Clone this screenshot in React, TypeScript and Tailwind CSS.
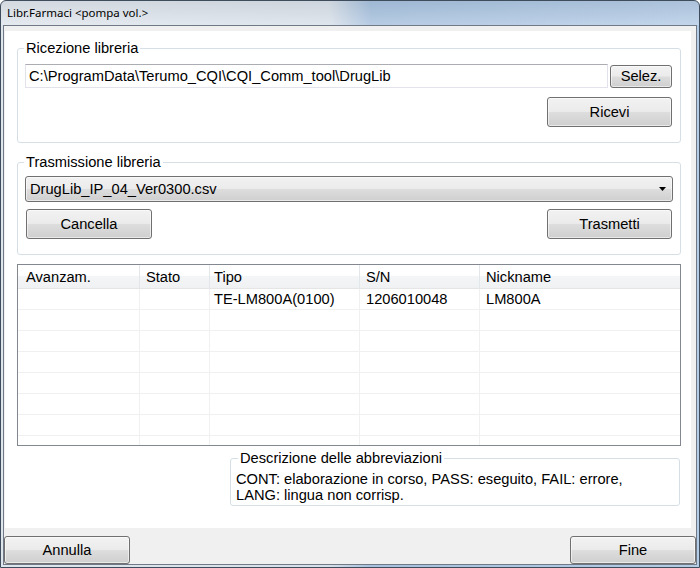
import type { ReactNode } from "react";

const sans = "font-['Liberation_Sans',Arial,sans-serif]";

const skin =
  "flex items-center rounded-[3px] border border-[#707070] bg-[linear-gradient(to_bottom,#f2f2f2_0%,#ebebeb_48%,#dddddd_52%,#cfcfcf_100%)] shadow-[inset_0_0_0_1px_rgba(255,255,255,0.55)] text-[14.67px] leading-[17px] text-black";

function Btn({ children, className = "" }: { children: ReactNode; className?: string }) {
  return <button className={`${skin} justify-center ${className}`}>{children}</button>;
}

function GroupBox({
  title,
  className = "",
  legendClass = "ml-[-1px]",
  children,
}: {
  title: string;
  className?: string;
  legendClass?: string;
  children: ReactNode;
}) {
  return (
    <fieldset className={`min-w-0 rounded-[3px] border border-[#d5dfe5] ${className}`}>
      <legend className={`px-[2px] text-[14.67px] leading-[17px] text-black ${legendClass}`}>{title}</legend>
      {children}
    </fieldset>
  );
}

const columns = [
  { name: "Avanzam.", w: "w-[122px]", pad: "pl-[8px]" },
  { name: "Stato", w: "w-[70px]", pad: "pl-[6px]" },
  { name: "Tipo", w: "w-[150px]", pad: "pl-[4px]" },
  { name: "S/N", w: "w-[120px]", pad: "pl-[6px]" },
  { name: "Nickname", w: "w-[200px]", pad: "pl-[6px]" },
];

const rows = [
  ["", "", "TE-LM800A(0100)", "1206010048", "LM800A"],
  ["", "", "", "", ""],
  ["", "", "", "", ""],
  ["", "", "", "", ""],
  ["", "", "", "", ""],
  ["", "", "", "", ""],
  ["", "", "", "", ""],
  ["", "", "", "", ""],
];

function DeviceTable() {
  return (
    <div className="ml-[12px] mt-[9px] h-[182px] w-[664px] overflow-hidden border border-[#828790] bg-white">
      <div className="flex h-[24px] border-b border-[#e5e5e5] bg-[linear-gradient(to_bottom,#ffffff_0%,#ffffff_45%,#f4f5f6_50%,#f0f1f2_100%)]">
        {columns.map((c, i) => (
          <div
            key={c.name}
            className={`${c.w} ${c.pad} shrink-0 text-[14.67px] leading-[24px] ${i < 4 ? "border-r border-[#e3e6ea]" : ""}`}
          >
            {c.name}
          </div>
        ))}
      </div>
      {rows.map((r, ri) => (
        <div key={ri} className="flex h-[21px] border-b border-[#f0f0f0]">
          {r.map((cell, ci) => (
            <div
              key={ci}
              className={`${columns[ci].w} ${columns[ci].pad} shrink-0 text-[14.67px] leading-[20px] ${ci < 4 ? "border-r border-[#f0f0f0]" : ""}`}
            >
              {cell}
            </div>
          ))}
        </div>
      ))}
    </div>
  );
}

export default function App() {
  return (
    <div
      className={`${sans} flex h-[568px] w-[700px] flex-col overflow-hidden rounded-t-[6px] border border-[#3e4c5c] bg-[linear-gradient(to_right,#dfe5ec_0%,#d8e0e9_47%,#a7c1de_53%,#b5cce6_100%)] text-black`}
    >
      {/* title bar */}
      <div className="flex h-[24px] shrink-0 items-center bg-[linear-gradient(to_bottom,rgba(0,0,0,0.05)_0%,rgba(255,255,255,0.18)_100%)] pl-[6px] font-['Noto_Sans','Open_Sans',sans-serif] text-[11.5px] text-black">
        Libr.Farmaci &lt;pompa vol.&gt;
      </div>

      <div className="flex flex-1 px-[2px] pb-[2px]">
        <div className="flex flex-1 flex-col border border-[#6f7a86] bg-[#f0f0f0]">
          {/* white panel */}
          <div className="ml-[1px] mr-[5px] mt-[5px] h-[497px] bg-white">
            <GroupBox title="Ricezione libreria" className="ml-[12px] mt-[9px] w-[664px] pb-[15px] pl-[7px] pr-[8px] pt-[7px]">
              <div className="flex items-start">
                <div className="flex h-[24px] flex-1 items-center border border-[#e2e3ea] border-t-[#abadb3] pl-[3px] text-[14.67px]">
                  C:\ProgramData\Terumo_CQI\CQI_Comm_tool\DrugLib
                </div>
                <Btn className="ml-[2px] mt-[1px] h-[23px] w-[62px]">Selez.</Btn>
              </div>
              <div className="mt-[9px] flex justify-end">
                <Btn className="h-[30px] w-[125px]">Ricevi</Btn>
              </div>
            </GroupBox>

            <GroupBox title="Trasmissione libreria" className="ml-[12px] mt-[11px] w-[664px] pb-[15px] pl-[7px] pr-[8px] pt-[5px]">
              <div className={`${skin} mr-[-1px] h-[26px] justify-between pl-[4px] pr-[6px]`}>
                <span>DrugLib_IP_04_Ver0300.csv</span>
                <svg width="7" height="4" viewBox="0 0 7 4">
                  <path d="M0 0H7L3.5 4Z" fill="#000" />
                </svg>
              </div>
              <div className="mt-[7px] flex justify-between">
                <Btn className="ml-[1px] h-[30px] w-[126px]">Cancella</Btn>
                <Btn className="h-[30px] w-[125px]">Trasmetti</Btn>
              </div>
            </GroupBox>

            <DeviceTable />

            <GroupBox
              title="Descrizione delle abbreviazioni"
              legendClass="ml-[2px]"
              className="ml-[225px] mt-[4px] w-[450px] pb-[2px] pl-[5px] pt-[4px]"
            >
              <p className="text-[14.67px] leading-[16px]">
                CONT: elaborazione in corso, PASS: eseguito, FAIL: errore,
                <br />
                LANG: lingua non corrisp.
              </p>
            </GroupBox>
          </div>

          {/* bottom buttons */}
          <div className="mt-[8px] flex justify-between">
            <Btn className="h-[28px] w-[126px]">Annulla</Btn>
            <Btn className="h-[28px] w-[126px]">Fine</Btn>
          </div>
        </div>
      </div>
    </div>
  );
}
